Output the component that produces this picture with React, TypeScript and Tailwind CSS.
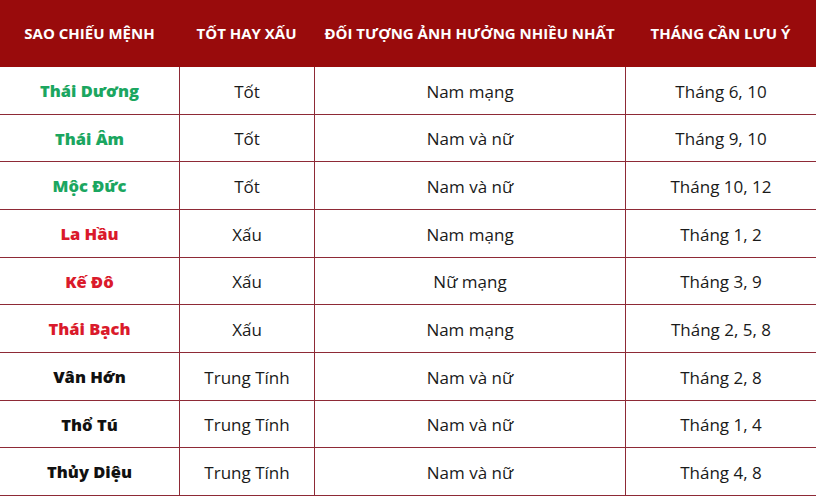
import React from "react";

type Row = { name: string; color: string; kind: string; who: string; month: string };

const GREEN = "text-[#1ba660]";
const RED = "text-[#da1a2b]";
const BLACK = "text-[#111111]";

const rows: Row[] = [
  { name: "Thái Dương", color: GREEN, kind: "Tốt", who: "Nam mạng", month: "Tháng 6, 10" },
  { name: "Thái Âm", color: GREEN, kind: "Tốt", who: "Nam và nữ", month: "Tháng 9, 10" },
  { name: "Mộc Đức", color: GREEN, kind: "Tốt", who: "Nam và nữ", month: "Tháng 10, 12" },
  { name: "La Hầu", color: RED, kind: "Xấu", who: "Nam mạng", month: "Tháng 1, 2" },
  { name: "Kế Đô", color: RED, kind: "Xấu", who: "Nữ mạng", month: "Tháng 3, 9" },
  { name: "Thái Bạch", color: RED, kind: "Xấu", who: "Nam mạng", month: "Tháng 2, 5, 8" },
  { name: "Vân Hớn", color: BLACK, kind: "Trung Tính", who: "Nam và nữ", month: "Tháng 2, 8" },
  { name: "Thổ Tú", color: BLACK, kind: "Trung Tính", who: "Nam và nữ", month: "Tháng 1, 4" },
  { name: "Thủy Diệu", color: BLACK, kind: "Trung Tính", who: "Nam và nữ", month: "Tháng 4, 8" },
];

export default function App() {
  return (
    <div
      className="w-[816px] h-[498px] bg-white overflow-hidden"
      style={{ fontFamily: '"Open Sans", "Liberation Sans", sans-serif' }}
    >
      <div className="grid grid-cols-[179px_135px_311px_191px] h-[67px] bg-[#990b0c] text-white font-bold text-[15px] items-center text-center">
        <div>SAO CHIẾU MỆNH</div>
        <div>TỐT HAY XẤU</div>
        <div>ĐỐI TƯỢNG ẢNH HƯỞNG NHIỀU NHẤT</div>
        <div>THÁNG CẦN LƯU Ý</div>
      </div>
      {rows.map((r) => (
        <div
          key={r.name}
          className="grid grid-cols-[179px_135px_311px_191px] h-[47.67px] border-b border-[#8e2a36] text-[17px] text-[#1a1a1a] text-center"
        >
          <div className={`flex items-center justify-center pt-[2px] font-extrabold text-[16.5px] ${r.color}`}>{r.name}</div>
          <div className="flex items-center justify-center pt-[2px] border-l border-[#8e2a36]">{r.kind}</div>
          <div className="flex items-center justify-center pt-[2px] border-l border-[#8e2a36]">{r.who}</div>
          <div className="flex items-center justify-center pt-[2px] border-l border-[#8e2a36]">{r.month}</div>
        </div>
      ))}
    </div>
  );
}
